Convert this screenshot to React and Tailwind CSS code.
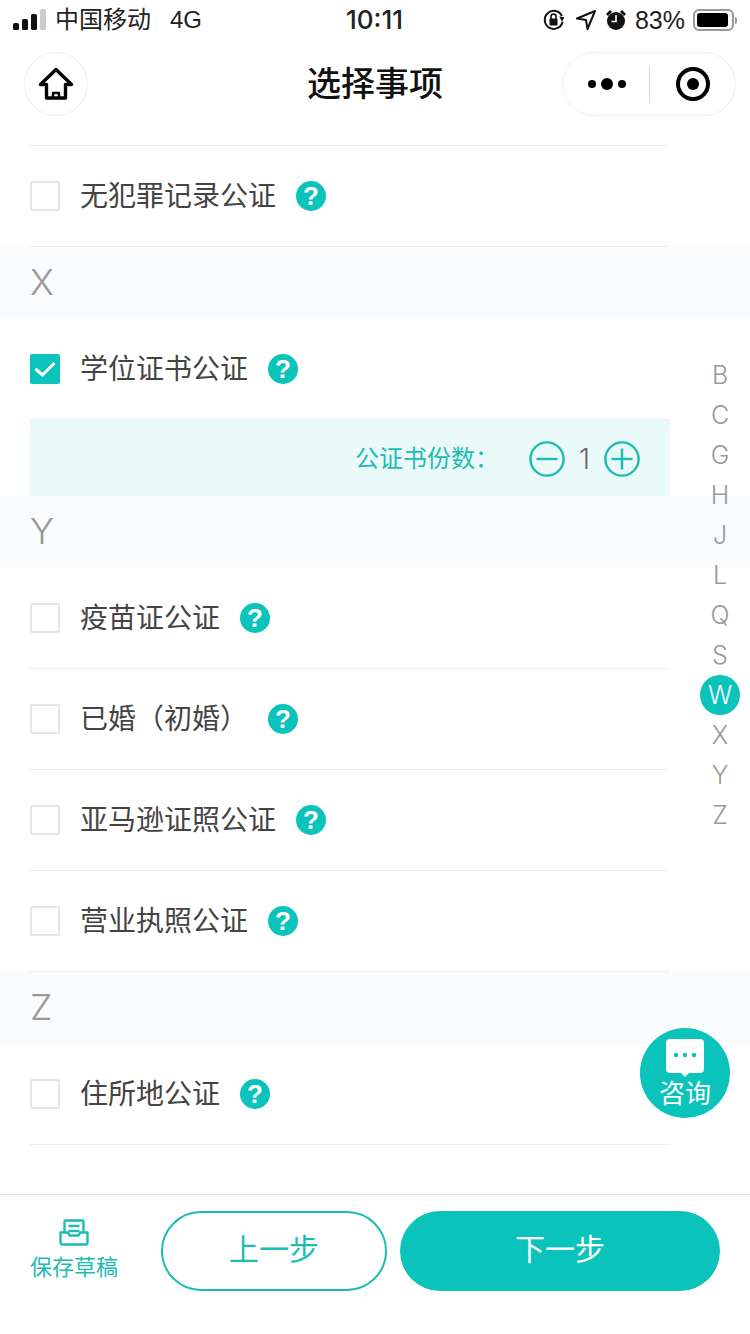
import React from "react";

const FONT = { fontFamily: '"Inter", "Noto Sans CJK SC", sans-serif' };

const Help = () => (
  <span className="flex h-[30px] w-[30px] shrink-0 items-center justify-center rounded-full bg-[#0ac3bb] text-[26px] font-bold leading-none text-white font-['Liberation_Sans',sans-serif]">
    ?
  </span>
);

const Check = ({ on }) =>
  on ? (
    <span className="flex h-[30px] w-[30px] shrink-0 items-center justify-center rounded-[2px] bg-[#0ac3bb]">
      <svg width="24" height="20" viewBox="0 0 24 20" fill="none">
        <path d="M2.5 10l7 6L21.5 4" stroke="#fff" strokeWidth="3" />
      </svg>
    </span>
  ) : (
    <span className="h-[30px] w-[30px] shrink-0 rounded-[2px] border-2 border-[#e6e6e6] bg-white" />
  );

const Row = ({ label, on }) => (
  <div className="mx-[30px] flex h-[101px] w-[640px] items-center border-b border-[#eeeeee]">
    <Check on={on} />
    <span className="ml-[20px] text-[28px] leading-none text-[#444]">{label}</span>
    <span className="ml-[20px]">
      <Help />
    </span>
  </div>
);

const Section = ({ letter }) => (
  <div className="flex h-[72px] items-center bg-[#fafbfd] px-[30px] pb-[2px] text-[36px] font-light leading-none text-[#999]">
    {letter}
  </div>
);

const Circle = ({ plus }) => (
  <svg width="36" height="36" viewBox="0 0 36 36" fill="none" stroke="#1dbcb2" strokeWidth="2.4">
    <circle cx="18" cy="18" r="16.6" />
    <path d="M7.5 18h21" />
    {plus && <path d="M18 7.5v21" />}
  </svg>
);

const StatusBar = () => (
  <div className="flex h-[40px] shrink-0 items-center justify-between pl-[13px] pr-[14px] text-[24px] leading-none text-[#222]">
    <div className="flex w-[300px] items-center">
      <svg width="34" height="22" viewBox="0 0 34 22">
        <rect x="0" y="14" width="6" height="7" rx="1.5" fill="#111" />
        <rect x="9" y="10" width="6" height="11" rx="1.5" fill="#111" />
        <rect x="18" y="5" width="6" height="16" rx="1.5" fill="#111" />
        <rect x="27" y="0" width="6" height="21" rx="1.5" fill="#ccc" />
      </svg>
      <span className="ml-[8px]">中国移动</span>
      <span className="ml-[19px] font-['Liberation_Sans',sans-serif]">4G</span>
    </div>
    <span className="text-[26px] font-medium">10:11</span>
    <div className="flex w-[300px] items-center justify-end">
      <svg width="24" height="24" viewBox="0 0 24 24" fill="none">
        <path d="M20.5 14a9 9 0 1 1-.6-6" stroke="#111" strokeWidth="2" />
        <path d="M17 9l5 0-1.5 5z" fill="#111" transform="rotate(8 20 11)" />
        <rect x="7.5" y="10.5" width="8" height="7" rx="1" fill="#111" />
        <path d="M9 11V8.5a2.5 2.5 0 0 1 5 0V11" stroke="#111" strokeWidth="1.6" />
      </svg>
      <svg className="ml-[9px]" width="22" height="22" viewBox="0 0 22 22" fill="none">
        <path d="M20 2L2 9.5l9 1.5 1.5 9z" stroke="#111" strokeWidth="2" strokeLinejoin="round" />
      </svg>
      <svg className="ml-[8px]" width="22" height="24" viewBox="0 0 22 24">
        <circle cx="11" cy="13" r="9" fill="#111" />
        <path d="M11 7v6.5H6.5" stroke="#fff" strokeWidth="1.6" fill="none" />
        <path d="M1 6l4-4 2 2-4 4zM21 6l-4-4-2 2 4 4z" fill="#111" />
      </svg>
      <span className="ml-[8px] text-[25px] font-['Liberation_Sans',sans-serif]">83%</span>
      <span className="relative ml-[8px] mr-[2px] flex h-[22px] w-[41px] items-center rounded-[6px] border-2 border-[#999] p-[2px]">
        <span className="h-full w-[31px] rounded-[3px] bg-black" />
        <span className="absolute -right-[5px] h-[7px] w-[2px] rounded-r bg-[#999]" />
      </span>
    </div>
  </div>
);

const NavBar = () => (
  <div className="relative flex h-[88px] shrink-0 items-center justify-between pl-[24px] pr-[14px]">
    <div className="flex h-[64px] w-[64px] items-center justify-center rounded-full border border-[#f0f0f0]">
      <svg width="36" height="34" viewBox="0 0 36 34" fill="none" stroke="#000" strokeWidth="3.4" strokeLinejoin="round">
        <path d="M18 2.5L2.5 17.5H8.5V31H27.5V17.5H33.5Z" />
        <path d="M15 31v-5h6v5" strokeWidth="2.4" />
      </svg>
    </div>
    <span className="absolute left-1/2 -translate-x-1/2 text-[34px] font-medium leading-none text-[#111]">
      选择事项
    </span>
    <div className="flex h-[64px] w-[174px] items-center rounded-full border border-[#f0f0f0]">
      <div className="flex w-[86px] items-center justify-center gap-[5px] pl-[2px]">
        <span className="h-[8px] w-[8px] rounded-full bg-black" />
        <span className="h-[12px] w-[12px] rounded-full bg-black" />
        <span className="h-[8px] w-[8px] rounded-full bg-black" />
      </div>
      <span className="h-[37px] w-px bg-[#ddd]" />
      <div className="flex flex-1 items-center justify-center">
        <span className="flex h-[34px] w-[34px] items-center justify-center rounded-full border-[4px] border-black">
          <span className="h-[12px] w-[12px] rounded-full bg-black" />
        </span>
      </div>
    </div>
  </div>
);

const INDEX = ["B", "C", "G", "H", "J", "L", "Q", "S", "W", "X", "Y", "Z"];

const LetterIndex = () => (
  <div className="absolute right-[10px] top-[355px] w-[40px] text-[25px] font-light leading-none text-[#999]">
    {INDEX.map((l) => (
      <div
        key={l}
        className={`flex h-[40px] w-[40px] items-center justify-center ${l === "W" ? "rounded-full bg-[#0ac3bb] text-white" : ""}`}
      >
        {l}
      </div>
    ))}
  </div>
);

const Consult = () => (
  <div className="absolute left-[640px] top-[1028px] flex h-[90px] w-[90px] flex-col items-center rounded-full bg-[#0ac3bb] pt-[11px] text-white">
    <svg width="38" height="38" viewBox="0 0 38 38">
      <path d="M4 0h30a4 4 0 0 1 4 4v26a4 4 0 0 1-4 4H23l-4 4-4-4H4a4 4 0 0 1-4-4V4a4 4 0 0 1 4-4z" fill="#fff" />
      <circle cx="10" cy="16" r="2.2" fill="#0ac3bb" />
      <circle cx="19" cy="16" r="2.2" fill="#0ac3bb" />
      <circle cx="28" cy="16" r="2.2" fill="#0ac3bb" />
    </svg>
    <span className="mt-[2px] text-[26px] leading-[30px]">咨询</span>
  </div>
);

const Footer = () => (
  <div className="mt-[49px] flex h-[140px] shrink-0 items-start border-t border-[#e5e5e5] pl-[30px] pt-[16px]">
    <div className="flex w-[88px] flex-col items-center pt-[8px] text-[#1dbcb2]">
      <svg width="30" height="27" viewBox="0 0 30 27" fill="none" stroke="#1dbcb2" strokeWidth="2.4" strokeLinejoin="round">
        <path d="M5.5 13V2.5a1 1 0 0 1 1-1h17a1 1 0 0 1 1 1V13" />
        <path d="M9.5 7h11M9.5 12h11" />
        <path d="M1.5 13.5h7.5l1.5 3h9l1.5-3h7.5v10a2 2 0 0 1-2 2h-23a2 2 0 0 1-2-2z" />
      </svg>
      <span className="mt-[7px] whitespace-nowrap text-[22px] leading-[28px]">保存草稿</span>
    </div>
    <button className="ml-[43px] h-[80px] w-[226px] rounded-full border-2 border-[#1dbcb2] pb-[4px] text-[30px] text-[#1dbcb2]">
      上一步
    </button>
    <button className="ml-[13px] h-[80px] w-[320px] rounded-full bg-[#0ac3bb] pb-[4px] text-[30px] text-white">
      下一步
    </button>
  </div>
);

export default function App() {
  return (
    <div className="relative flex h-[1334px] w-[750px] flex-col overflow-hidden bg-white" style={FONT}>
      <StatusBar />
      <NavBar />
      <div className="mx-[30px] h-[18px] w-[640px] shrink-0 border-b border-[#eeeeee]" />
      <Row label="无犯罪记录公证" />
      <Section letter="X" />
      <Row label="学位证书公证" on />
      <div className="mx-[30px] flex h-[76px] w-[640px] shrink-0 items-center justify-end bg-[#e9faf9] pr-[30px] pt-[2px]">
        <span className="mr-[30px] text-[24px] leading-none text-[#1dbcb2]">公证书份数：</span>
        <Circle />
        <span className="w-[39px] text-center text-[28px] font-light leading-none text-[#666]">1</span>
        <Circle plus />
      </div>
      <Section letter="Y" />
      <Row label="疫苗证公证" />
      <Row label="已婚（初婚）" />
      <Row label="亚马逊证照公证" />
      <Row label="营业执照公证" />
      <Section letter="Z" />
      <Row label="住所地公证" />
      <Footer />
      <LetterIndex />
      <Consult />
    </div>
  );
}
